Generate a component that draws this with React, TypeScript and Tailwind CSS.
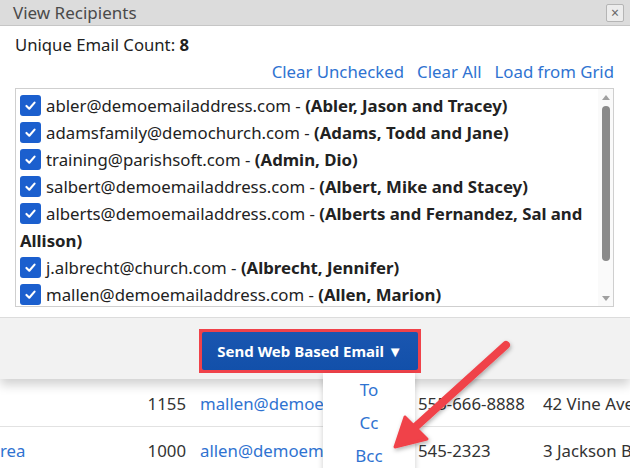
import React from "react";

const rows: { email: string; name: string }[] = [
  { email: "abler@demoemailaddress.com", name: "(Abler, Jason and Tracey)" },
  { email: "adamsfamily@demochurch.com", name: "(Adams, Todd and Jane)" },
  { email: "training@parishsoft.com", name: "(Admin, Dio)" },
  { email: "salbert@demoemailaddress.com", name: "(Albert, Mike and Stacey)" },
  { email: "alberts@demoemailaddress.com", name: "(Alberts and Fernandez, Sal and Allison)" },
  { email: "j.albrecht@church.com", name: "(Albrecht, Jennifer)" },
  { email: "mallen@demoemailaddress.com", name: "(Allen, Marion)" },
];

function Check() {
  return (
    <span className="float-left mt-[3px] mr-[5px] flex items-center justify-center w-[21px] h-[21px] rounded-[3px] bg-[#1b5fce]">
      <svg width="13" height="13" viewBox="0 0 16 16">
        <path d="M3 8.5 L6.5 12 L13 4.5" fill="none" stroke="white" strokeWidth="2.6" strokeLinecap="round" strokeLinejoin="round" />
      </svg>
    </span>
  );
}

export default function App() {
  return (
    <div className="relative w-[630px] h-[468px] overflow-hidden bg-white text-[#222]" style={{ fontFamily: '"Noto Sans", "Open Sans", sans-serif' }}>
      {/* Dialog */}
      <div className="relative z-10 bg-white shadow-[0_6px_10px_rgba(0,0,0,0.18)]">
        <div className="h-[26px] bg-[#dcdcdc] border-b border-[#c6c6c6] flex items-center justify-between pl-[13px] pr-[6px]">
          <span className="text-[17px] text-[#4a4a4a] leading-none">View Recipients</span>
          <span className="w-[18px] h-[18px] border border-[#b5b5b5] bg-[#ececec] rounded-[2px] flex items-center justify-center text-[#666] text-[14px] leading-none">×</span>
        </div>
        <div className="px-[15px] pt-[9px]">
          <div className="text-[16.7px] leading-[20px]">
            Unique Email Count: <b>8</b>
          </div>
          <div className="flex justify-end gap-[13px] mt-[7px] pr-[1px] text-[16.8px] leading-[20px] text-[#2f73d1]">
            <span>Clear Unchecked</span>
            <span>Clear All</span>
            <span>Load from Grid</span>
          </div>
          <div className="mt-[6px] w-[599px] h-[219px] border border-[#cfcfcf] flex">
            <div className="flex-1 pl-[4px] pt-[3px] text-[16.8px] leading-[27px] overflow-hidden">
              {rows.map((r) => (
                <div key={r.email} className="flow-root">
                  <Check />
                  {r.email} - <b>{r.name}</b>
                </div>
              ))}
            </div>
            <div className="w-[15px] flex flex-col items-center bg-[#fafafa] pt-[6px] pb-[5px]">
              <svg width="8" height="5" viewBox="0 0 8 5"><path d="M0 5 L4 0 L8 5Z" fill="#a0a0a0" /></svg>
              <div className="mt-[6px] w-[8px] h-[155px] rounded-full bg-[#8a8a8a]" />
              <div className="flex-1" />
              <svg width="8" height="5" viewBox="0 0 8 5"><path d="M0 0 L4 5 L8 0Z" fill="#a0a0a0" /></svg>
            </div>
          </div>
        </div>
        <div className="mt-[10px] h-[62px] bg-[#f2f2f2] border-t border-[#dcdcdc] flex justify-center pt-[11px]">
          <div className="ml-[-10px] h-[44px] p-[3px] bg-[#f0424a]">
            <div className="h-full w-[216px] bg-gradient-to-b from-[#1a56b0] to-[#1250aa] rounded-[2px] flex items-center justify-center text-white font-bold text-[15px]">
              Send Web Based Email ▼
            </div>
          </div>
        </div>
      </div>

      {/* Background table */}
      <div className="text-[16.8px] text-[#333]">
        <div className="h-[48px] border-b border-[#e2e2e2] flex items-center pt-[2px]">
          <span className="w-[186px] shrink-0 text-right">1155</span>
          <span className="ml-[14px] w-[218px] shrink-0 text-[#2f73d1]">
            <span className="block w-[160px] overflow-hidden whitespace-nowrap">mallen@demoemailaddress.com</span>
          </span>
          <span className="w-[125px] shrink-0 overflow-hidden whitespace-nowrap">555-666-8888</span>
          <span className="whitespace-nowrap">42 Vine Ave</span>
        </div>
        <div className="h-[48px] flex items-center">
          <span className="w-[186px] shrink-0 flex justify-between">
            <span className="text-[#2f73d1]">rea</span>
            <span>1000</span>
          </span>
          <span className="ml-[14px] w-[218px] shrink-0 text-[#2f73d1]">
            <span className="block w-[160px] overflow-hidden whitespace-nowrap">allen@demoemailaddress.com</span>
          </span>
          <span className="w-[125px] shrink-0 overflow-hidden whitespace-nowrap">545-2323</span>
          <span className="whitespace-nowrap">3 Jackson Blvd</span>
        </div>
      </div>

      {/* Dropdown menu */}
      <div className="absolute z-20 left-[323px] top-[373px] w-[92px] h-[100px] bg-white shadow-[0_2px_6px_rgba(0,0,0,0.2)] flex flex-col items-center text-[17px] text-[#2f73d1] leading-[33px]">
        <span>To</span>
        <span>Cc</span>
        <span>Bcc</span>
      </div>

      {/* Red arrow */}
      <svg className="absolute z-30 left-0 top-0" width="630" height="468" viewBox="0 0 630 468">
        <defs>
          <filter id="sh" x="-20%" y="-20%" width="140%" height="140%">
            <feDropShadow dx="1" dy="2" stdDeviation="2" floodColor="#000" floodOpacity="0.3" />
          </filter>
        </defs>
        <g filter="url(#sh)" fill="#f0424a" stroke="#f0424a">
          <line x1="506" y1="345" x2="412" y2="430" strokeWidth="8" strokeLinecap="round" />
          <path d="M395 447 L405 417 L427 439 Z" strokeWidth="3" strokeLinejoin="round" />
        </g>
      </svg>
    </div>
  );
}
